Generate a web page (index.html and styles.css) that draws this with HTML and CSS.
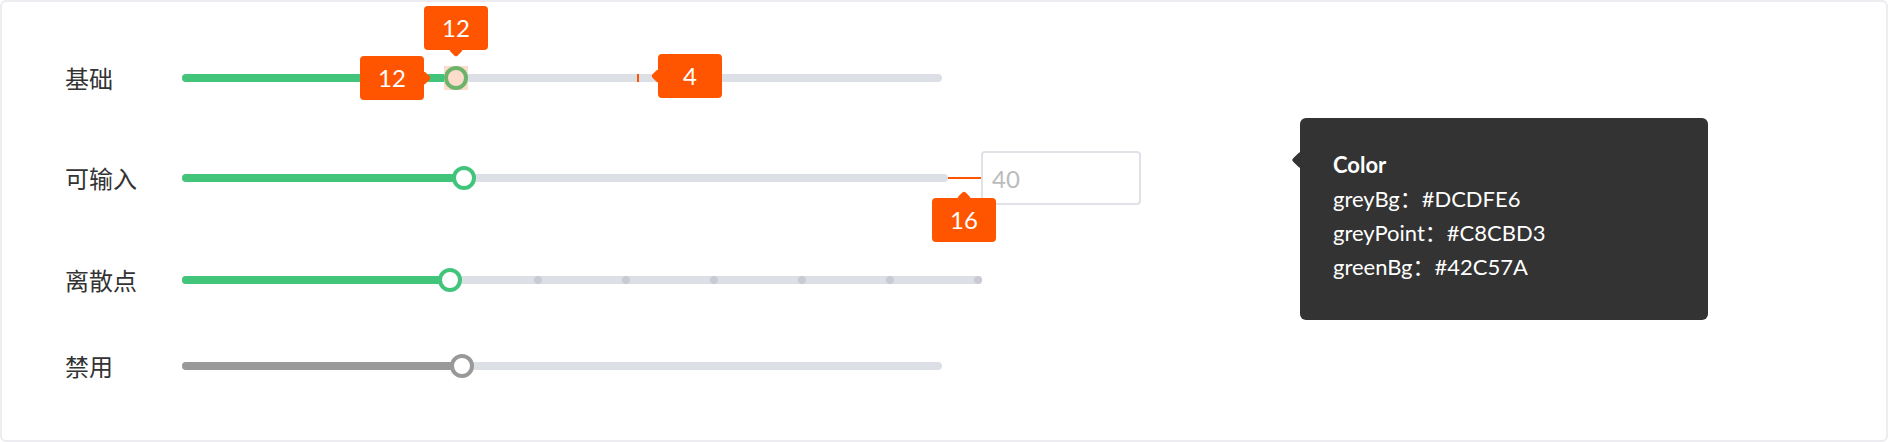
FILE: index.html
```html
<!DOCTYPE html>
<html lang="zh">
<head>
<meta charset="utf-8">
<title>Slider</title>
<link rel="stylesheet" href="styles.css">
</head>
<body>
<div class="card">
  <div class="sliders">
    <div class="row row-basic">
      <div class="label">基础</div>
      <div class="track w760">
        <div class="fill" style="width:274px"></div>
        <div class="tick" style="left:455px"></div>
        <div class="tip tip-right" style="left:178px;top:-18px">12</div>
        <div class="tip tip-down" style="left:242px;top:-68px">12</div>
        <div class="tip tip-left" style="left:476px;top:-20px">4</div>
        <div class="thumb thumb-focus" style="left:262px"></div>
      </div>
    </div>
    <div class="row row-input">
      <div class="label">可输入</div>
      <div class="track w766">
        <div class="fill" style="width:282px"></div>
        <div class="thumb" style="left:270px"></div>
      </div>
      <div class="connector">
        <div class="tip tip-up tip-below">16</div>
      </div>
      <input class="num-input" type="text" placeholder="40">
    </div>
    <div class="row row-steps">
      <div class="label">离散点</div>
      <div class="track w800">
        <div class="dots">
          <span class="dot"></span><span class="dot"></span><span class="dot"></span><span class="dot"></span><span class="dot"></span>
          <span class="dot"></span><span class="dot"></span><span class="dot"></span><span class="dot"></span><span class="dot"></span>
        </div>
        <div class="fill" style="width:268px"></div>
        <div class="thumb" style="left:256px"></div>
      </div>
    </div>
    <div class="row row-disabled">
      <div class="label">禁用</div>
      <div class="track w760 disabled">
        <div class="fill" style="width:280px"></div>
        <div class="thumb" style="left:268px"></div>
      </div>
    </div>
  </div>
  <div class="popover">
    <div class="pop-title">Color</div>
    <div class="pop-line">greyBg：#DCDFE6</div>
    <div class="pop-line">greyPoint：#C8CBD3</div>
    <div class="pop-line">greenBg：#42C57A</div>
  </div>
</div>
</body>
</html>
```
FILE: styles.css
```css
html, body {
  margin: 0;
  padding: 0;
  background: #ffffff;
}

.card {
  box-sizing: border-box;
  width: 1888px;
  height: 442px;
  border: 2px solid #ececf1;
  border-radius: 6px;
  background: #ffffff;
  display: flex;
  align-items: flex-start;
  padding: 48px 0 0 63px;
  font-family: "Lato", "Noto Sans CJK SC", sans-serif;
}

.sliders {
  width: 1076px;
  display: flex;
  flex-direction: column;
}

.row {
  display: flex;
  align-items: center;
  height: 56px;
}

.row-input { margin-top: 44px; }
.row-steps { margin-top: 46px; }
.row-disabled { margin-top: 30px; }

.label {
  width: 117px;
  flex: none;
  font-family: "Noto Sans CJK SC", sans-serif;
  font-size: 24px;
  line-height: 1;
  color: #333333;
}

.track {
  position: relative;
  flex: none;
  height: 8px;
  border-radius: 4px;
  background: #dcdfe6;
}

.w760 { width: 760px; }
.w766 { width: 766px; }
.w800 { width: 800px; }

.fill {
  position: absolute;
  left: 0;
  top: 0;
  height: 8px;
  border-radius: 4px;
  background: #42c57a;
}

.disabled .fill { background: #999999; }

.thumb {
  position: absolute;
  top: -8px;
  box-sizing: border-box;
  width: 24px;
  height: 24px;
  border: 4px solid #42c57a;
  border-radius: 50%;
  background: #ffffff;
}

.disabled .thumb { border-color: #999999; }

.thumb-focus {
  border: none;
  border-radius: 0;
  background: #fcdccb;
}

.thumb-focus::after {
  content: "";
  position: absolute;
  inset: 0;
  box-sizing: border-box;
  border: 4px solid #6cb46c;
  border-radius: 50%;
}

.tick {
  position: absolute;
  top: 0;
  width: 2px;
  height: 8px;
  background: #ff5500;
}

.dots {
  position: absolute;
  inset: 0;
  display: flex;
  justify-content: space-between;
}

.dot {
  width: 8px;
  height: 8px;
  border-radius: 50%;
  background: #c8cbd3;
}

.tip {
  position: absolute;
  z-index: 2;
  width: 64px;
  height: 44px;
  border-radius: 4px;
  background: #ff5500;
  color: #ffffff;
  font-family: "Lato", sans-serif;
  font-size: 24px;
  line-height: 44px;
  text-align: center;
}

.tip::after {
  content: "";
  position: absolute;
  width: 10px;
  height: 10px;
  border-radius: 2px;
  background: #ff5500;
  transform: rotate(45deg);
}

.tip-down::after { left: 27px; bottom: -5px; }
.tip-up::after { left: 27px; top: -5px; }
.tip-left::after { left: -5px; top: 17px; }
.tip-right::after { right: -5px; top: 17px; }

.connector {
  position: relative;
  flex: none;
  width: 33px;
  height: 2px;
  background: #ff5500;
}

.tip-below {
  left: -16px;
  top: 21px;
}

.num-input {
  box-sizing: border-box;
  flex: none;
  width: 160px;
  height: 54px;
  margin: 0;
  padding: 0 0 0 9px;
  border: 2px solid #e0e2e8;
  border-radius: 4px;
  outline: none;
  background: #ffffff;
  font-family: "Lato", sans-serif;
  font-size: 24px;
  color: #333333;
}

.num-input::placeholder { color: #bbbbbb; }

.popover {
  position: relative;
  box-sizing: border-box;
  flex: none;
  width: 408px;
  height: 202px;
  margin: 68px 0 0 159px;
  padding: 30px 0 0 33px;
  border-radius: 6px;
  background: #333333;
  color: #ffffff;
  font-family: "Lato", "Noto Sans CJK SC", sans-serif;
  font-size: 22px;
  line-height: 34px;
}

.popover::before {
  content: "";
  position: absolute;
  left: -6px;
  top: 36px;
  width: 12px;
  height: 12px;
  border-radius: 2px;
  background: #333333;
  transform: rotate(45deg);
}

.pop-title { font-weight: 700; }
```
